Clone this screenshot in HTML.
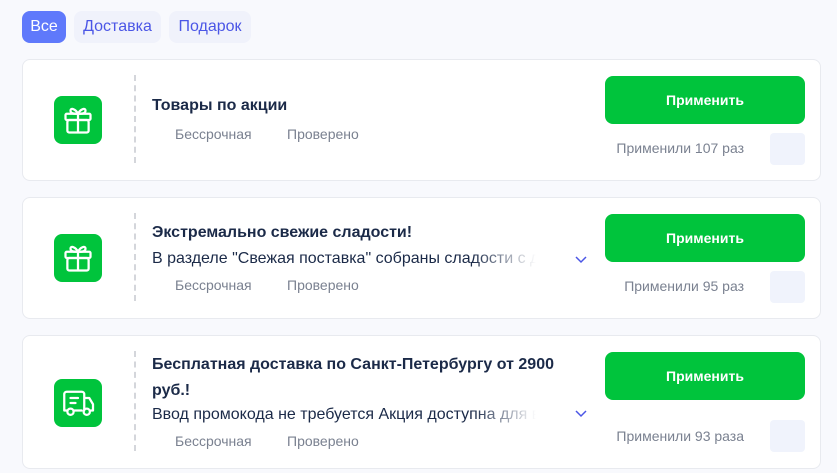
<!DOCTYPE html>
<html><head><meta charset="utf-8"><style>
*{box-sizing:border-box;margin:0;padding:0}
body{width:837px;height:473px;overflow:hidden;background:#f8f9fd;font-family:"Liberation Sans",sans-serif;position:relative}
.tab{position:absolute;top:11px;height:32px;border-radius:8px;font-size:16px;line-height:32px;text-align:center;color:#4b56e6;background:#f0f2fb}
.card{position:absolute;left:22px;width:799px;background:#fff;border:1px solid #e8eaef;border-radius:8px}
.ic{position:absolute;left:31px;width:48px;height:48px;background:#00c43c;border-radius:8px}
.ic svg{position:absolute;left:4px;top:4px}
.dash{position:absolute;left:111px;width:0;border-left:2px dashed #d4d6db}
.t{position:absolute;left:129px;font-size:16px;font-weight:bold;color:#1b2a48;line-height:26px;width:430px}
.d{position:absolute;left:129px;font-size:16px;color:#1b2a48;line-height:26px;width:400px;white-space:nowrap;overflow:hidden;-webkit-mask-image:linear-gradient(to right,#000 80%,transparent 96%)}
.m{position:absolute;font-size:14px;color:#7a8190;line-height:20px}
.chev{position:absolute;left:551px}
.btn{position:absolute;left:582px;width:200px;height:48px;background:#00c43c;border-radius:8px;color:#fff;font-weight:bold;font-size:14px;line-height:48px;text-align:center}
.ap{position:absolute;right:76px;font-size:14px;color:#7a8190;line-height:20px}
.sq{position:absolute;left:747px;width:35px;height:32px;background:#f0f3fc;border-radius:4px}
</style></head><body>
<div class="tab" style="left:22px;width:44px;background:#5f79fb;color:#fff">Все</div>
<div class="tab" style="left:74px;width:87px">Доставка</div>
<div class="tab" style="left:169px;width:82px">Подарок</div>

<div class="card" style="top:59px;height:122px">
 <div class="ic" style="top:36px"><svg width="40" height="40" viewBox="0 0 32 32" fill="none" stroke="#fff" stroke-width="1.8" stroke-linejoin="round"><rect x="6" y="11" width="20" height="5" rx="1"/><rect x="7.5" y="16" width="17" height="10" rx="1.5"/><path d="M16 11v15M16 11c-2-4-6-5-6-2.5S13 11 16 11zM16 11c2-4 6-5 6-2.5S19 11 16 11z"/></svg></div>
 <div class="dash" style="top:15px;height:88px"></div>
 <div class="t" style="top:33px">Товары по акции</div>
 <div class="m" style="left:152px;top:64px">Бессрочная</div>
 <div class="m" style="left:264px;top:64px">Проверено</div>
 <div class="btn" style="top:16px">Применить</div>
 <div class="ap" style="top:78px">Применили 107 раз</div>
 <div class="sq" style="top:73px"></div>
</div>

<div class="card" style="top:197px;height:122px">
 <div class="ic" style="top:36px"><svg width="40" height="40" viewBox="0 0 32 32" fill="none" stroke="#fff" stroke-width="1.8" stroke-linejoin="round"><rect x="6" y="11" width="20" height="5" rx="1"/><rect x="7.5" y="16" width="17" height="10" rx="1.5"/><path d="M16 11v15M16 11c-2-4-6-5-6-2.5S13 11 16 11zM16 11c2-4 6-5 6-2.5S19 11 16 11z"/></svg></div>
 <div class="dash" style="top:15px;height:88px"></div>
 <div class="t" style="top:22px">Экстремально свежие сладости!</div>
 <div class="d" style="top:48px">В разделе "Свежая поставка" собраны сладости с доставкой</div>
 <svg class="chev" style="top:56px" width="14" height="10" viewBox="0 0 14 10"><path d="M2 3l5 5 5-5" fill="none" stroke="#4b56e6" stroke-width="1.5"/></svg>
 <div class="m" style="left:152px;top:77px">Бессрочная</div>
 <div class="m" style="left:264px;top:77px">Проверено</div>
 <div class="btn" style="top:16px">Применить</div>
 <div class="ap" style="top:78px">Применили 95 раз</div>
 <div class="sq" style="top:73px"></div>
</div>

<div class="card" style="top:335px;height:134px">
 <div class="ic" style="top:43px"><svg width="40" height="40" viewBox="0 0 32 32" fill="none" stroke="#fff" stroke-width="1.8" stroke-linejoin="round" stroke-linecap="round"><path d="M5 22V9a2 2 0 0 1 2-2h12a2 2 0 0 1 2 2v13M21 12h4l3 5v5h-2M5 22h2M13 22h6M10 12h6M10 16h4"/><circle cx="10" cy="23" r="2.5"/><circle cx="23" cy="23" r="2.5"/></svg></div>
 <div class="dash" style="top:15px;height:100px"></div>
 <div class="t" style="top:16px">Бесплатная доставка по Санкт-Петербургу от 2900 руб.!</div>
 <div class="d" style="top:66px">Ввод промокода не требуется Акция доступна для всех</div>
 <svg class="chev" style="top:72px" width="14" height="10" viewBox="0 0 14 10"><path d="M2 3l5 5 5-5" fill="none" stroke="#4b56e6" stroke-width="1.5"/></svg>
 <div class="m" style="left:152px;top:95px">Бессрочная</div>
 <div class="m" style="left:264px;top:95px">Проверено</div>
 <div class="btn" style="top:16px">Применить</div>
 <div class="ap" style="top:90px">Применили 93 раза</div>
 <div class="sq" style="top:84px"></div>
</div>
</body></html>
